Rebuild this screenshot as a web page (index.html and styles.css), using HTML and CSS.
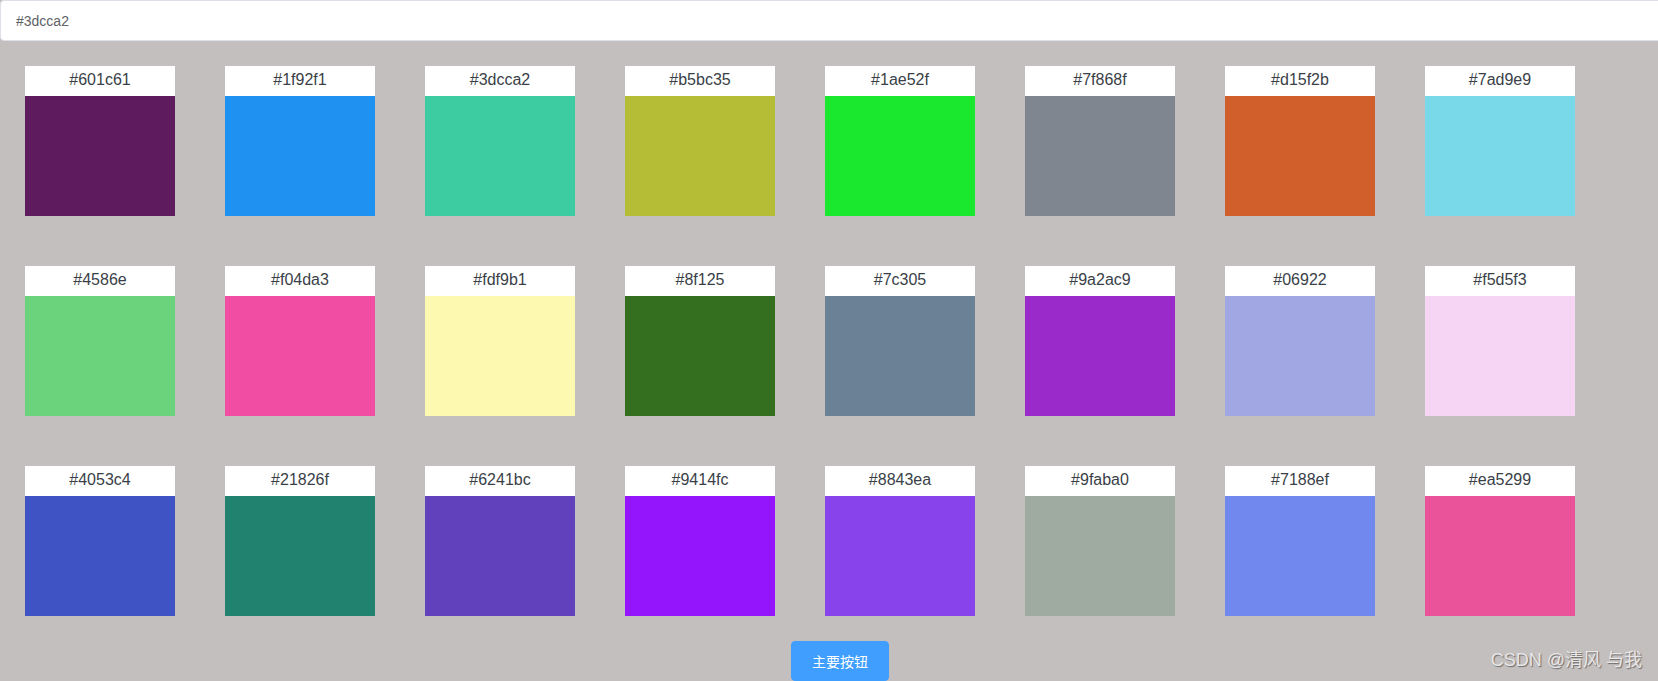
FILE: index.html
```html
<!DOCTYPE html>
<html lang="zh">
<head>
<meta charset="utf-8">
<title>Colors</title>
<link rel="stylesheet" href="styles.css">
</head>
<body>
<div class="page">
  <div class="search"><input class="search-input" type="text" value="#3dcca2"></div>
  <div class="grid">
    <div class="card"><div class="label">#601c61</div><div class="swatch" style="background:#5e1c5f"></div></div>
    <div class="card"><div class="label">#1f92f1</div><div class="swatch" style="background:#1f92f1"></div></div>
    <div class="card"><div class="label">#3dcca2</div><div class="swatch" style="background:#3dcca2"></div></div>
    <div class="card"><div class="label">#b5bc35</div><div class="swatch" style="background:#b5bc35"></div></div>
    <div class="card"><div class="label">#1ae52f</div><div class="swatch" style="background:#1ae82f"></div></div>
    <div class="card"><div class="label">#7f868f</div><div class="swatch" style="background:#7f868f"></div></div>
    <div class="card"><div class="label">#d15f2b</div><div class="swatch" style="background:#d15f2b"></div></div>
    <div class="card"><div class="label">#7ad9e9</div><div class="swatch" style="background:#7ad9e9"></div></div>

    <div class="card"><div class="label">#4586e</div><div class="swatch" style="background:#6bd37b"></div></div>
    <div class="card"><div class="label">#f04da3</div><div class="swatch" style="background:#f04da3"></div></div>
    <div class="card"><div class="label">#fdf9b1</div><div class="swatch" style="background:#fdf9b1"></div></div>
    <div class="card"><div class="label">#8f125</div><div class="swatch" style="background:#346e1f"></div></div>
    <div class="card"><div class="label">#7c305</div><div class="swatch" style="background:#6b8196"></div></div>
    <div class="card"><div class="label">#9a2ac9</div><div class="swatch" style="background:#9a2ac9"></div></div>
    <div class="card"><div class="label">#06922</div><div class="swatch" style="background:#a0a7e2"></div></div>
    <div class="card"><div class="label">#f5d5f3</div><div class="swatch" style="background:#f5d5f3"></div></div>

    <div class="card"><div class="label">#4053c4</div><div class="swatch" style="background:#4053c4"></div></div>
    <div class="card"><div class="label">#21826f</div><div class="swatch" style="background:#21826f"></div></div>
    <div class="card"><div class="label">#6241bc</div><div class="swatch" style="background:#6241bc"></div></div>
    <div class="card"><div class="label">#9414fc</div><div class="swatch" style="background:#9414fc"></div></div>
    <div class="card"><div class="label">#8843ea</div><div class="swatch" style="background:#8843ea"></div></div>
    <div class="card"><div class="label">#9faba0</div><div class="swatch" style="background:#9faba0"></div></div>
    <div class="card"><div class="label">#7188ef</div><div class="swatch" style="background:#7188ef"></div></div>
    <div class="card"><div class="label">#ea5299</div><div class="swatch" style="background:#ea5299"></div></div>
  </div>
  <div class="actions"><button class="btn-primary" type="button">主要按钮</button></div>
  <div class="watermark">CSDN @清风 与我</div>
</div>
</body>
</html>
```

FILE: styles.css
```css
html, body {
  margin: 0;
  padding: 0;
  height: 100%;
  overflow: hidden;
  background: #c3bfbe;
}
.page {
  position: relative;
  height: 681px;
  font-family: "Liberation Sans", Arial, "Noto Sans CJK SC", sans-serif;
}
.search-input {
  display: block;
  box-sizing: border-box;
  width: calc(100% + 10px);
  height: 41px;
  margin: 0;
  padding: 0 15px;
  border: 1px solid #dcdfe6;
  border-radius: 4px;
  background: #fff;
  color: #606266;
  font-family: "Liberation Sans", Arial, sans-serif;
  font-size: 14px;
  outline: none;
}
.grid {
  display: grid;
  grid-template-columns: repeat(8, 150px);
  column-gap: 50px;
  row-gap: 50px;
  padding: 25px 0 0 25px;
}
.card {
  width: 150px;
  display: flex;
  flex-direction: column;
}
.label {
  height: 30px;
  line-height: 28px;
  background: #fff;
  color: #3a3f48;
  font-size: 16px;
  text-align: center;
}
.swatch {
  height: 120px;
}
.actions {
  padding: 25px 0 0 791px;
}
.btn-primary {
  box-sizing: border-box;
  width: 98px;
  height: 40px;
  padding: 12px 20px;
  border: 1px solid #409eff;
  border-radius: 4px;
  background: #409eff;
  color: #fff;
  font-family: "Noto Sans CJK SC", sans-serif;
  font-size: 14px;
  line-height: 14px;
  cursor: pointer;
}
.watermark {
  position: absolute;
  right: 16px;
  bottom: 10px;
  color: #e8e6e6;
  font-family: "Liberation Sans", Arial, "Noto Sans CJK SC", sans-serif;
  font-size: 18px;
  text-shadow: 1px 1px 1px #6c6a6a;
}
```
